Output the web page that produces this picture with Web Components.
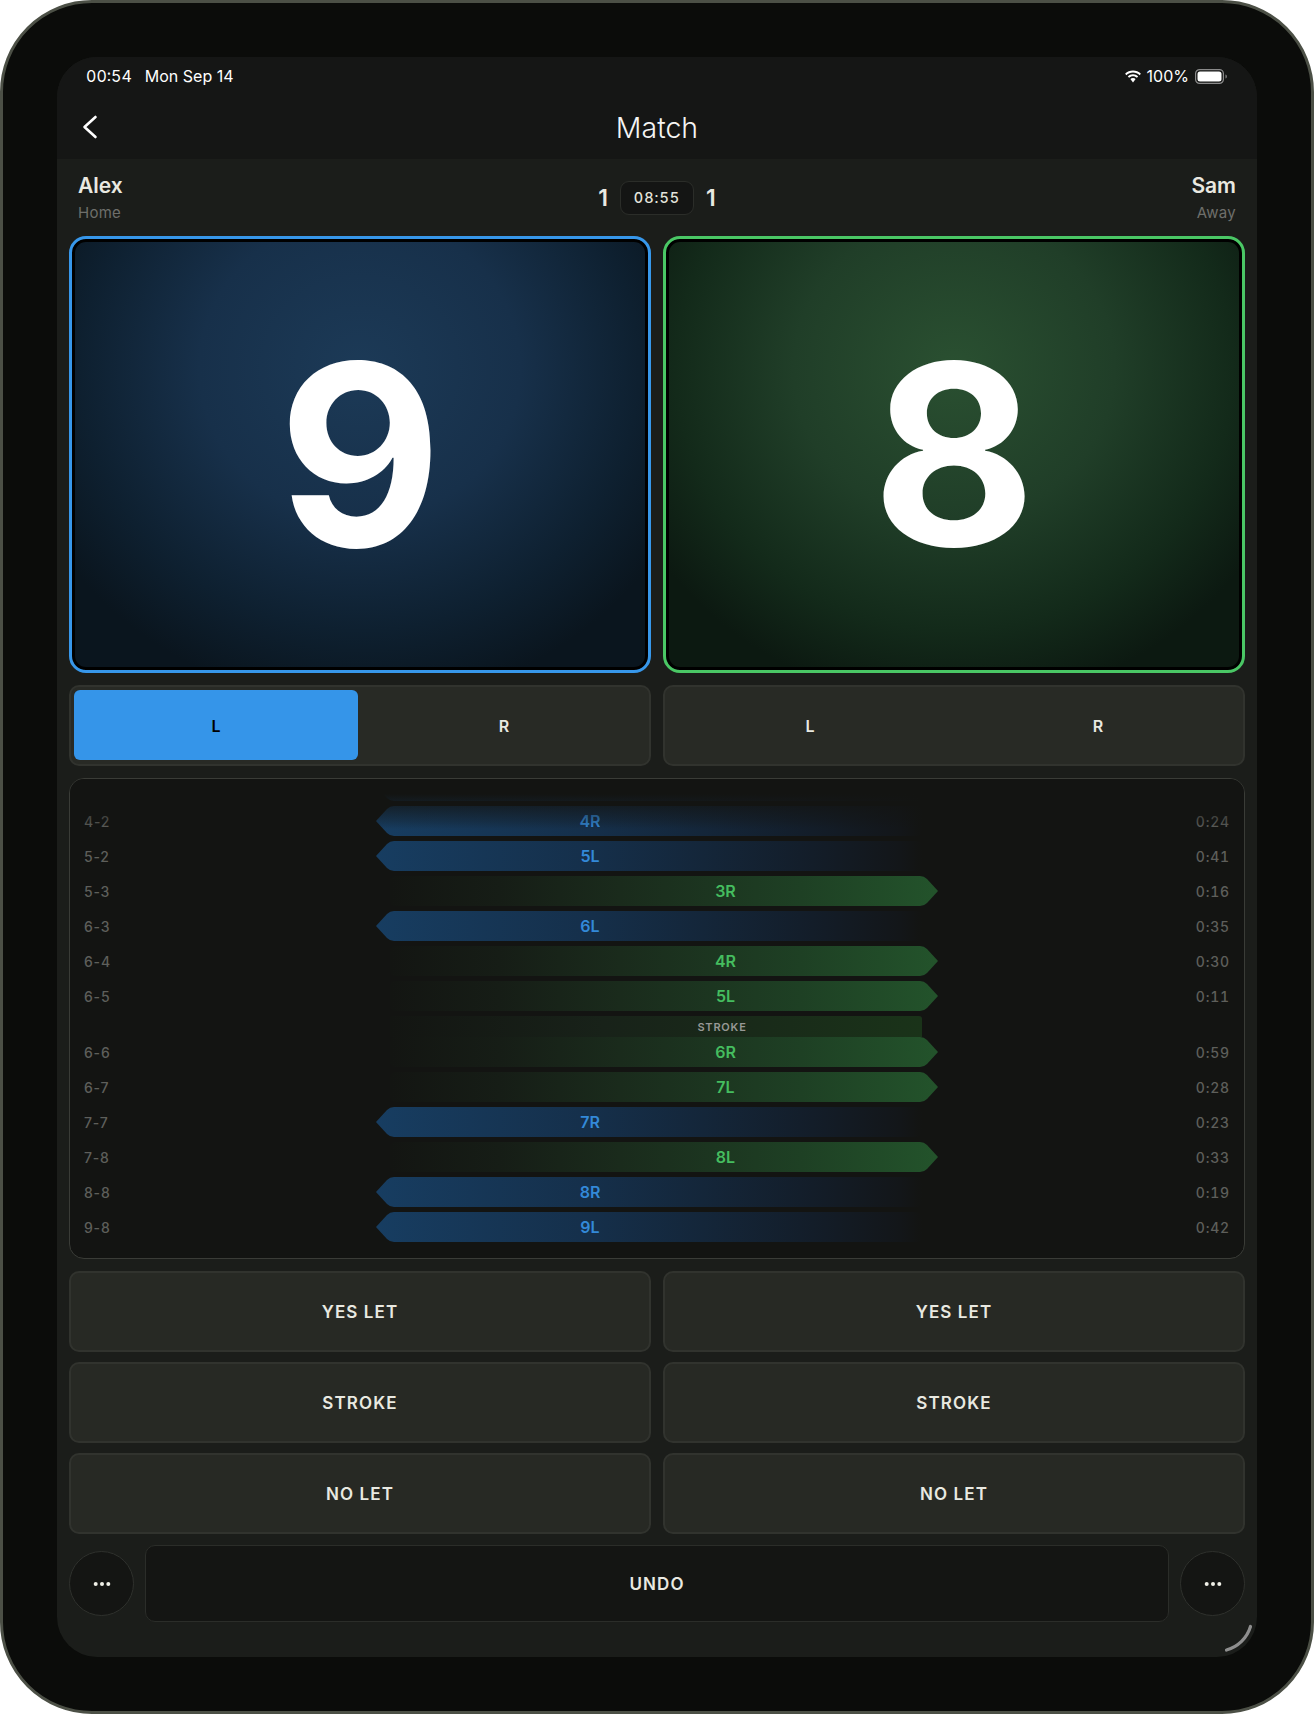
<!DOCTYPE html>
<html lang="en">
<head>
<meta charset="utf-8">
<title>Match</title>
<style>
  html, body { margin: 0; padding: 0; background: #fff; }
  body { font-family: Inter, "Liberation Sans", sans-serif; color: #e9e9e1; }
</style>
</head>
<body>
<match-app></match-app>

<script>
class StatusBar extends HTMLElement {
    constructor() {
        super();
        this.attachShadow({ mode: "open" });
        this.shadowRoot.innerHTML = `
        <style>
          :host {
            display: flex;
            align-items: center;
            height: 38px;
            padding: 0 29px 0 29px;
            font-size: 16px;
            color: #fff;
          }
          .clock { font-variant-numeric: tabular-nums; }
          .date { margin-left: 13px; }
          .right { margin-left: auto; display: flex; align-items: center; gap: 5px; }
          svg { display: block; }
        </style>
        <span class="clock">00:54</span><span class="date">Mon Sep 14</span>
        <div class="right">
          <svg width="18" height="13" viewBox="0 0 18 13" fill="#fff">
            <path d="M9 2.600c2.500 0 4.800 1 6.600 2.600l1.300-1.400C14.800 1.800 12 .6 9 .6S3.200 1.800 1.100 3.800l1.300 1.400C4.200 3.600 6.500 2.600 9 2.600z"/>
            <path d="M9 6.300c1.500 0 2.900.6 3.900 1.500l1.300-1.400C12.800 5.100 11 4.300 9 4.300s-3.800.8-5.200 2.100l1.300 1.400c1-.9 2.400-1.500 3.900-1.500z"/>
            <path d="M9 8c-1 0-1.900.4-2.600 1L9 12.600 11.600 9C10.900 8.400 10 8 9 8z"/>
          </svg>
          <span>100%</span>
          <svg width="33" height="15" viewBox="0 0 33 15" style="margin-left:1px">
            <rect x=".6" y=".6" width="27.800" height="13.800" rx="4" fill="none" stroke="#8a8a8a" stroke-width="1.200"/>
            <rect x="2.500" y="2.500" width="24" height="10" rx="2.500" fill="#fff"/>
            <path d="M30.500 5.500c.9.3 1.300 1 1.300 2s-.4 1.700-1.300 2z" fill="#8a8a8a"/>
          </svg>
        </div>
      `;
    }
}

class NavBar extends HTMLElement {
    constructor() {
        super();
        this.attachShadow({ mode: "open" });
        this.shadowRoot.innerHTML = `
        <style>
          :host {
            display: flex;
            align-items: center;
            justify-content: center;
            position: relative;
            height: 64px;
            font-size: 28.500px;
            font-weight: 300;
            color: #f4f4f4;
          }
          svg { position: absolute; left: 25px; top: 20px; }
        </style>
        <svg width="16" height="24" viewBox="0 0 16 24" fill="none" stroke="#fff" stroke-width="2.600" stroke-linecap="round" stroke-linejoin="round">
          <path d="M13.500 2 L2.500 12 L13.500 22"/>
        </svg>
        <slot></slot>
      `;
    }
}

class PlayerName extends HTMLElement {
    constructor() {
        super();
        this.attachShadow({ mode: "open" });
    }

    connectedCallback() {
        this.shadowRoot.innerHTML = `
        <style>
          :host { display: flex; flex-direction: column; gap: 6px; padding-top: 1px; }
          :host([align="right"]) { align-items: flex-end; }
          .name { font-size: 21px; line-height: 24px; font-weight: 600; color: #e9e9e1; }
          .role { font-size: 15px; line-height: 18px; letter-spacing: 0.25px; color: #6e6f6b; }
        </style>
        <div class="name">${this.getAttribute("name")}</div>
        <div class="role">${this.getAttribute("role")}</div>
      `;
    }
}

class GameClock extends HTMLElement {
    constructor() {
        super();
        this.attachShadow({ mode: "open" });
    }

    connectedCallback() {
        this.shadowRoot.innerHTML = `
        <style>
          :host { display: flex; align-items: center; gap: 12px; }
          .games { font-size: 23px; font-weight: 600; color: #e9e9e1; }
          .pill {
            box-sizing: border-box;
            width: 74px;
            height: 34px;
            display: flex;
            align-items: center;
            justify-content: center;
            background: #141514;
            border: 1px solid #2b2d29;
            border-radius: 9px;
            font-size: 14.500px;
            font-weight: 500;
            letter-spacing: 1px;
            font-variant-numeric: tabular-nums;
            color: #e4e4dc;
          }
        </style>
        <span class="games">${this.getAttribute("home")}</span>
        <span class="pill">${this.getAttribute("time")}</span>
        <span class="games">${this.getAttribute("away")}</span>
      `;
    }
}

class ScoreCard extends HTMLElement {
    constructor() {
        super();
        this.attachShadow({ mode: "open" });
    }

    connectedCallback() {
        this.shadowRoot.innerHTML = `
        <style>
          :host {
            box-sizing: border-box;
            display: flex;
            align-items: center;
            justify-content: center;
            border: 3px solid var(--edge);
            border-radius: 17px;
            box-shadow: inset 0 0 0 3px #000;
            background: var(--glow);
            font-size: 252px;
            line-height: 1;
            font-weight: 700;
            color: #fff;
          }
          :host([side="home"]) {
            --edge: #3797ea;
            --glow: radial-gradient(ellipse 62% 78% at 50% 30%, #1c3a57 0%, #17304a 45%, #0e2030 78%, #0a151e 100%);
          }
          :host([side="away"]) {
            --edge: #4ac765;
            --glow: radial-gradient(ellipse 62% 78% at 50% 30%, #2a5031 0%, #203e28 45%, #132a1a 78%, #0c1911 100%);
          }
        </style>
        <slot></slot>
      `;
    }
}

class SideToggle extends HTMLElement {
    constructor() {
        super();
        this.attachShadow({ mode: "open" });
    }

    connectedCallback() {
        const selected = this.getAttribute("selected");
        const option = (letter) =>
            `<div class="option ${selected === letter ? "selected" : ""}">${letter}</div>`;
        this.shadowRoot.innerHTML = `
        <style>
          :host {
            box-sizing: border-box;
            display: grid;
            grid-template-columns: 1fr 1fr;
            gap: 4px;
            padding: 3px 3px 4px 3px;
            background: #282a25;
            border: 2px solid #31332e;
            border-radius: 10px;
          }
          .option {
            display: flex;
            align-items: center;
            justify-content: center;
            padding-top: 1px;
            border-radius: 6px;
            font-size: 16px;
            font-weight: 600;
            color: #e9e9e1;
          }
          .selected { background: #3595e9; color: #000; }
        </style>
        ${option("L")}${option("R")}
      `;
    }
}

class RallyRow extends HTMLElement {
    constructor() {
        super();
        this.attachShadow({ mode: "open" });
    }

    connectedCallback() {
        const side = this.getAttribute("side");
        const note = this.getAttribute("note");
        this.shadowRoot.innerHTML = `
        <style>
          :host { display: block; }
          .line {
            display: grid;
            grid-template-columns: 292px 562px 1fr;
            align-items: center;
            height: 30px;
            font-size: 14px;
            font-weight: 500;
            letter-spacing: 0.8px;
            color: #5e5f5b;
          }
          .time { text-align: right; font-variant-numeric: tabular-nums; }
          .bar {
            height: 30px;
            display: flex;
            align-items: center;
            justify-content: center;
            font-size: 16px;
            font-weight: 600;
            letter-spacing: 0;
          }
          .home .bar {
            width: 546px;
            padding-right: 118px;
            box-sizing: border-box;
            color: #3389d8;
            background: linear-gradient(90deg, #173d61 0%, #152f4a 40%, #131d29 80%, #131619 96%, #131412 100%);
            clip-path: path("M0 15 L11 3 Q14 0 18 0 H540 Q546 0 546 6 V24 Q546 30 540 30 H18 Q14 30 11 27 Z");
          }
          .away .bar {
            width: 548px;
            margin-left: 14px;
            padding-left: 123px;
            box-sizing: border-box;
            color: #45bd5f;
            background: linear-gradient(90deg, #131512 0%, #161d16 20%, #1a2b1c 42%, #1e4024 75%, #23532b 100%);
            clip-path: path("M6 0 H530 Q534 0 537 3 L548 15 L537 27 Q534 30 530 30 H6 Q0 30 0 24 V6 Q0 0 6 0 Z");
          }
          .note {
            box-sizing: border-box;
            width: 532px;
            height: 21px;
            margin-left: 306px;
            padding-left: 132px;
            display: flex;
            align-items: center;
            justify-content: center;
            border-radius: 3px 3px 0 0;
            background: linear-gradient(90deg, #131512 0%, #182219 40%, #1a3319 100%);
            font-size: 11px;
            font-weight: 600;
            letter-spacing: 0.8px;
            color: #979895;
          }
        </style>
        ${note ? `<div class="note">${note}</div>` : ""}
        <div class="line ${side}">
          <span>${this.getAttribute("score") || ""}</span>
          <div class="bar">${this.getAttribute("shot") || ""}</div>
          <span class="time">${this.getAttribute("time") || ""}</span>
        </div>
      `;
    }
}

class RallyLog extends HTMLElement {
    constructor() {
        super();
        this.attachShadow({ mode: "open" });
        this.shadowRoot.innerHTML = `
        <style>
          :host {
            box-sizing: border-box;
            position: relative;
            display: flex;
            flex-direction: column;
            justify-content: flex-end;
            gap: 5px;
            overflow: hidden;
            padding: 0 14px 16px 14px;
            background: #131412;
            border: 1px solid #3a3c37;
            border-radius: 15px;
          }
          .fade {
            position: absolute;
            left: 0;
            right: 0;
            top: 0;
            height: 50px;
            background: linear-gradient(180deg, #131412 30%, rgba(19, 20, 18, 0.25) 85%, rgba(19, 20, 18, 0) 100%);
          }
        </style>
        <slot></slot>
        <div class="fade"></div>
      `;
    }
}

class ActionButton extends HTMLElement {
    constructor() {
        super();
        this.attachShadow({ mode: "open" });
        this.shadowRoot.innerHTML = `
        <style>
          :host {
            box-sizing: border-box;
            display: flex;
            align-items: center;
            justify-content: center;
            padding-top: 1px;
            background: #272924;
            border: 2px solid #31332e;
            border-radius: 10px;
            font-size: 17px;
            font-weight: 600;
            letter-spacing: 1.1px;
            color: #e9e9e1;
          }
          :host([quiet]) {
            background: #141513;
            border: 1px solid #2b2d29;
          }
        </style>
        <slot></slot>
      `;
    }
}

class RoundButton extends HTMLElement {
    constructor() {
        super();
        this.attachShadow({ mode: "open" });
        this.shadowRoot.innerHTML = `
        <style>
          :host {
            box-sizing: border-box;
            display: flex;
            align-items: center;
            justify-content: center;
            width: 65px;
            height: 65px;
            border-radius: 50%;
            background: #141513;
            border: 1px solid #2f312d;
          }
          svg { display: block; }
        </style>
        <svg width="18" height="6" viewBox="0 0 18 6" fill="#f0f0e8">
          <circle cx="2.700" cy="3" r="2"/><circle cx="9" cy="3" r="2"/><circle cx="15.300" cy="3" r="2"/>
        </svg>
      `;
    }
}

class MatchApp extends HTMLElement {
    constructor() {
        super();
        this.attachShadow({ mode: "open" });
        const rallies = [
            ["", "", "", "home"],
            ["4-2", "4R", "0:24", "home"],
            ["5-2", "5L", "0:41", "home"],
            ["5-3", "3R", "0:16", "away"],
            ["6-3", "6L", "0:35", "home"],
            ["6-4", "4R", "0:30", "away"],
            ["6-5", "5L", "0:11", "away"],
            ["6-6", "6R", "0:59", "away", "STROKE"],
            ["6-7", "7L", "0:28", "away"],
            ["7-7", "7R", "0:23", "home"],
            ["7-8", "8L", "0:33", "away"],
            ["8-8", "8R", "0:19", "home"],
            ["9-8", "9L", "0:42", "home"],
        ];
        const rows = rallies
            .map(
                ([score, shot, time, side, note]) =>
                    `<rally-row score="${score}" shot="${shot}" time="${time}" side="${side}"${note ? ` note="${note}"` : ""}></rally-row>`
            )
            .join("");
        const pair = (label) =>
            `<action-button>${label}</action-button><action-button>${label}</action-button>`;
        this.shadowRoot.innerHTML = `
        <style>
          :host {
            box-sizing: border-box;
            display: block;
            width: 1314px;
            height: 1714px;
            padding: 54px;
            background: #0b0c0a;
            border: 3px solid #4c5046;
            border-radius: 92px;
            font-family: Inter, "Liberation Sans", sans-serif;
          }
          .screen {
            position: relative;
            height: 1600px;
            display: flex;
            flex-direction: column;
            border-radius: 40px;
            overflow: hidden;
            background: #1b1d1a;
          }
          .top { background: #151615; }
          .content {
            flex: 1;
            display: flex;
            flex-direction: column;
            padding: 0 12px;
          }
          .header {
            height: 77px;
            padding: 0 9px;
            display: grid;
            grid-template-columns: 1fr auto 1fr;
            align-items: center;
          }
          .pair { display: grid; grid-template-columns: 1fr 1fr; gap: 12px; }
          .cards { height: 437px; }
          .cards score-card { height: 437px; }
          .toggles { margin-top: 12px; height: 81px; }
          rally-log { margin-top: 12px; height: 481px; }
          .actions {
            margin-top: 12px;
            grid-auto-rows: 81px;
            row-gap: 10px;
          }
          .bottom {
            margin-top: 11px;
            height: 77px;
            display: flex;
            align-items: center;
            gap: 11px;
          }
          .bottom action-button { flex: 1; height: 77px; }
          .corner { position: absolute; right: 3px; bottom: 3px; }
        </style>
        <div class="screen">
          <div class="top">
            <status-bar></status-bar>
            <nav-bar>Match</nav-bar>
          </div>
          <div class="content">
            <div class="header">
              <player-name name="Alex" role="Home"></player-name>
              <game-clock home="1" time="08:55" away="1"></game-clock>
              <player-name name="Sam" role="Away" align="right"></player-name>
            </div>
            <div class="pair cards">
              <score-card side="home">9</score-card>
              <score-card side="away">8</score-card>
            </div>
            <div class="pair toggles">
              <side-toggle selected="L"></side-toggle>
              <side-toggle></side-toggle>
            </div>
            <rally-log>${rows}</rally-log>
            <div class="pair actions">
              ${pair("YES LET")}
              ${pair("STROKE")}
              ${pair("NO LET")}
            </div>
            <div class="bottom">
              <round-button></round-button>
              <action-button quiet>UNDO</action-button>
              <round-button></round-button>
            </div>
          </div>
          <svg class="corner" width="30" height="30" viewBox="0 0 30 30" fill="none" stroke="#8e8e8e" stroke-width="3.200" stroke-linecap="round">
            <path d="M26.500 2.500 A34.500 34.500 0 0 1 2.500 26"/>
          </svg>
        </div>
      `;
    }
}

customElements.define("status-bar", StatusBar);
customElements.define("nav-bar", NavBar);
customElements.define("player-name", PlayerName);
customElements.define("game-clock", GameClock);
customElements.define("score-card", ScoreCard);
customElements.define("side-toggle", SideToggle);
customElements.define("rally-row", RallyRow);
customElements.define("rally-log", RallyLog);
customElements.define("action-button", ActionButton);
customElements.define("round-button", RoundButton);
customElements.define("match-app", MatchApp);
</script>
</body>
</html>
